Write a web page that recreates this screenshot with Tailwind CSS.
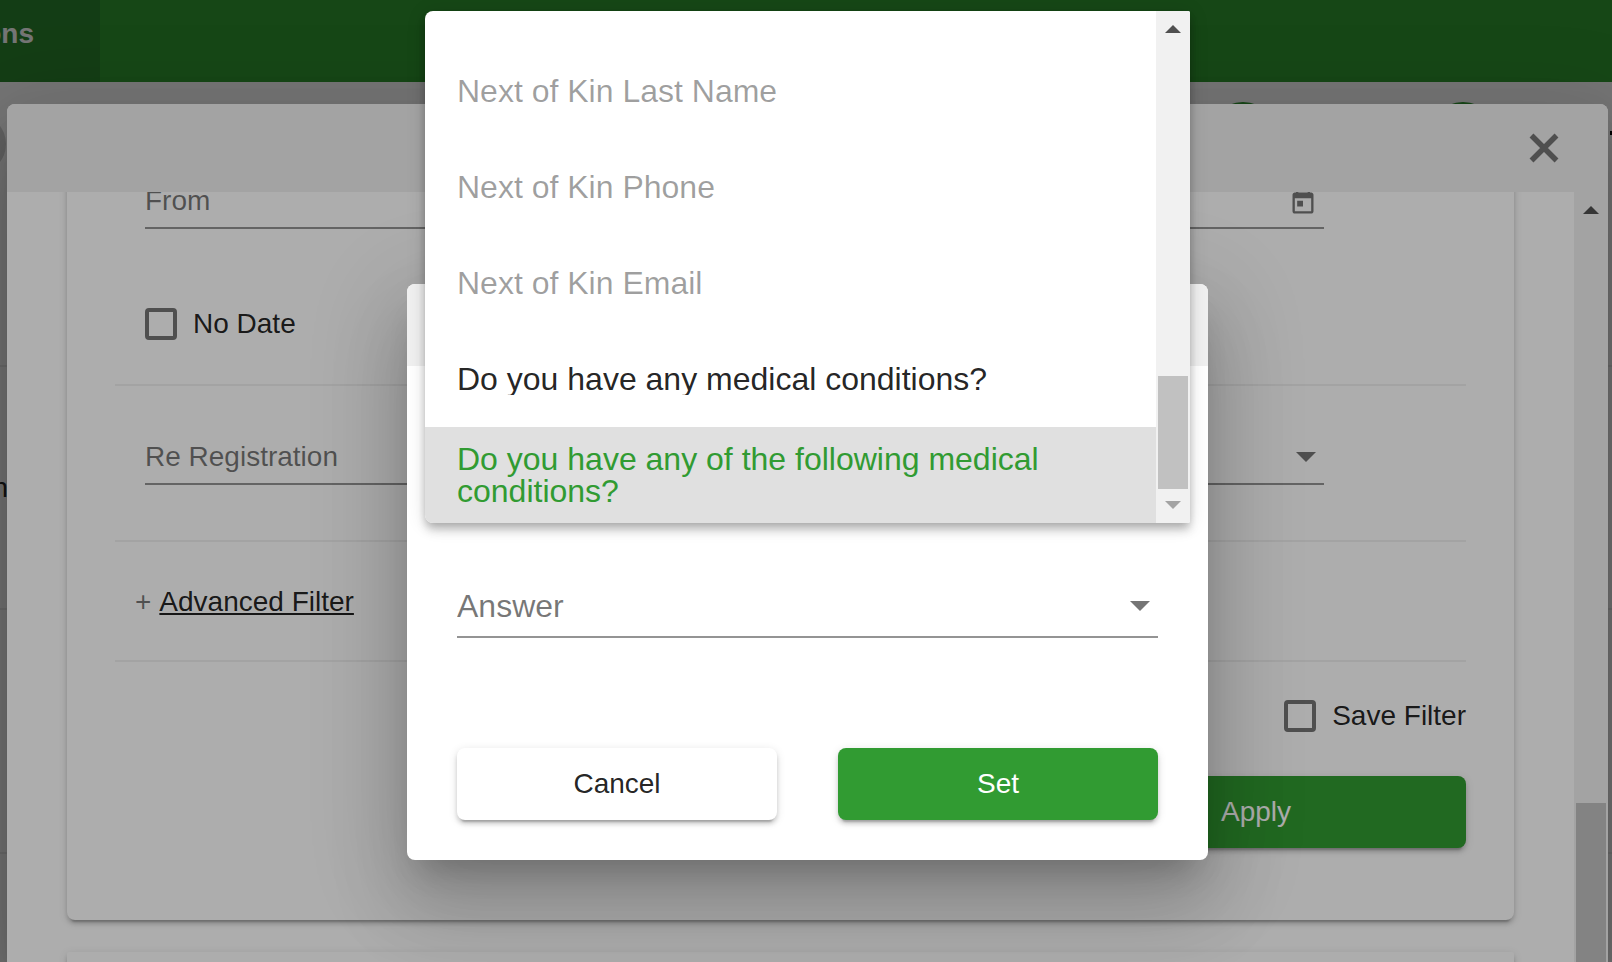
<!DOCTYPE html>
<html lang="en">
<head>
<meta charset="utf-8">
<title>Registrations filter</title>
<script src="https://cdn.jsdelivr.net/npm/@tailwindcss/browser@4"></script>
</head>
<body class="relative h-screen overflow-hidden bg-white font-['Liberation_Sans',Arial,sans-serif] text-[28px] leading-8 text-black/87">

  <!-- Page behind the dialogs -->
  <div class="flex h-screen flex-col overflow-hidden">
    <header class="flex h-[82px] shrink-0 bg-[#319b32]">
      <div class="flex w-[100px] justify-end bg-[#2c862e] pt-[18px] pr-[66px] font-bold text-white">ons</div>
    </header>
    <div class="relative h-[283px] shrink-0">
      <span class="absolute top-[32px] -left-[54px] size-[60px] rounded-full bg-[#d6d6d6]"></span>
      <span class="absolute top-[20px] right-[333px] size-[72px] rounded-full bg-[#319b32]"></span>
      <span class="absolute top-[20px] right-[113px] size-[72px] rounded-full bg-[#319b32]"></span>
      <span class="absolute top-[49px] right-0 h-1 w-[2px] bg-black"></span>
    </div>
    <div class="flex h-[243px] shrink-0 items-center border-t-2 border-[#ececec]"><span class="flex w-2 justify-end">n</span></div>
    <div class="h-[244px] shrink-0 border-t-2 border-[#ececec]"></div>
    <div class="h-[244px] shrink-0 border-t-2 border-[#ececec]"></div>
  </div>
  <div class="absolute inset-0 bg-black/32"></div>

  <!-- Filter dialog -->
  <div class="absolute inset-0 flex pt-[104px] pr-1 pl-[7px]">
    <section role="dialog" aria-label="Filter" class="flex min-w-0 flex-1 flex-col rounded-t-lg bg-white shadow-[0_22px_30px_-14px_rgba(0,0,0,0.2),0_48px_76px_6px_rgba(0,0,0,0.14),0_18px_92px_16px_rgba(0,0,0,0.12)]">
      <div class="flex h-[88px] shrink-0 items-center justify-end rounded-t-lg bg-[#f0f0f0] pr-[39px]">
        <button type="button" aria-label="Close" class="text-[#757575]">
          <svg class="size-[50px]" viewBox="0 0 50 50" fill="none" stroke="currentColor" stroke-width="5.5"><path d="M12.5 12.5L37.5 37.5M37.5 12.5L12.5 37.5"/></svg>
        </button>
      </div>
      <div class="flex min-h-0 flex-1">
        <div class="min-w-0 flex-1 overflow-hidden px-[60px]">
          <div class="-mt-3 flex flex-col rounded-b-lg bg-white px-12 pb-[72px] shadow-[0_6px_2px_-4px_rgba(0,0,0,0.2),0_4px_4px_rgba(0,0,0,0.14),0_2px_10px_rgba(0,0,0,0.12)]">
            <div class="mr-[142px] ml-[30px] flex h-[49px] items-start border-b-2 border-black/42 pt-[5px] pr-[7px]">
              <input type="text" aria-label="From" placeholder="From" class="h-8 min-w-0 flex-1 bg-transparent outline-none placeholder:text-black/54">
              <button type="button" aria-label="Open calendar" class="pt-1 text-black/54">
                <svg class="size-7" viewBox="0 0 24 24" fill="currentColor"><path d="M19 3h-1V1h-2v2H8V1H6v2H5c-1.11 0-1.99.9-1.99 2L3 19c0 1.1.89 2 2 2h14c1.1 0 2-.9 2-2V5c0-1.1-.9-2-2-2zm0 16H5V8h14v11zM7 10h5v5H7z"/></svg>
              </button>
            </div>
            <label class="mt-[79px] ml-[30px] flex items-center gap-4">
              <input type="checkbox" class="size-8 appearance-none rounded-sm border-4 border-[#757575]">No Date
            </label>
            <hr class="mt-11 border-t-2 border-[#f0f0f0]">
            <div class="mt-[50px] mr-[142px] ml-[30px] flex h-[49px] items-start border-b-2 border-black/42 pt-[5px] pr-2">
              <select aria-label="Re Registration" class="h-8 min-w-0 flex-1 appearance-none bg-transparent text-black/54 outline-none"><option>Re Registration</option></select>
              <svg class="mt-[11px] h-[10px] w-5" viewBox="0 0 20 10" fill="#757575"><path d="M0 0h20L10 10z"/></svg>
            </div>
            <hr class="mt-[55px] border-t-2 border-[#f0f0f0]">
            <div class="mt-11 ml-5 flex gap-2">
              <span class="text-black/54">+</span>
              <a href="#" class="underline decoration-2 underline-offset-2">Advanced Filter</a>
            </div>
            <hr class="mt-[42px] border-t-2 border-[#f0f0f0]">
            <label class="mt-[38px] flex items-center gap-4 self-end">
              <input type="checkbox" class="size-8 appearance-none rounded-sm border-4 border-[#757575]">Save Filter
            </label>
            <button type="button" class="mt-11 h-[72px] w-[420px] self-end rounded-lg bg-[#319b32] text-white shadow-[0_6px_2px_-4px_rgba(0,0,0,0.2),0_4px_4px_rgba(0,0,0,0.14),0_2px_10px_rgba(0,0,0,0.12)]">Apply</button>
          </div>
          <div class="mt-8 h-20 rounded-t-xs bg-white shadow-[0_6px_2px_-4px_rgba(0,0,0,0.2),0_4px_4px_rgba(0,0,0,0.14),0_2px_10px_rgba(0,0,0,0.12)]"></div>
        </div>
        <div aria-hidden="true" class="flex w-[34px] flex-col items-center bg-[#f1f1f1] pt-[14px]">
          <svg class="h-2 w-4 shrink-0" viewBox="0 0 16 8" fill="#505050"><path d="M0 8h16L8 0z"/></svg>
          <div class="mt-[589px] w-[30px] flex-1 bg-[#c1c1c1]"></div>
        </div>
      </div>
    </section>
  </div>
  <div class="absolute inset-0 bg-black/32"></div>

  <!-- Question and answer dialog -->
  <div class="absolute inset-0 flex items-start justify-center pt-[284px] pl-[3px]">
    <section role="dialog" aria-label="Advanced filter" class="relative w-[801px] rounded-lg bg-white shadow-[0_22px_30px_-14px_rgba(0,0,0,0.2),0_48px_76px_6px_rgba(0,0,0,0.14),0_18px_92px_16px_rgba(0,0,0,0.12)]">
      <div class="h-[82px] rounded-t-lg bg-[#f0f0f0]"></div>
      <div class="px-[50px] pt-[214px] pb-10">
        <div class="flex h-[58px] items-center border-b-2 border-black/42 pr-2 pb-1 text-[32px]">
          <select aria-label="Answer" class="h-10 min-w-0 flex-1 appearance-none bg-transparent text-black/54 outline-none"><option>Answer</option></select>
          <svg class="h-[10px] w-5" viewBox="0 0 20 10" fill="#757575"><path d="M0 0h20L10 10z"/></svg>
        </div>
        <div class="mt-[110px] flex justify-between">
          <button type="button" class="h-[72px] w-80 rounded-lg bg-white shadow-[0_6px_2px_-4px_rgba(0,0,0,0.2),0_4px_4px_rgba(0,0,0,0.14),0_2px_10px_rgba(0,0,0,0.12)]">Cancel</button>
          <button type="button" class="h-[72px] w-80 rounded-lg bg-[#319b32] text-white shadow-[0_6px_2px_-4px_rgba(0,0,0,0.2),0_4px_4px_rgba(0,0,0,0.14),0_2px_10px_rgba(0,0,0,0.12)]">Set</button>
        </div>
      </div>

      <!-- Open question list -->
      <div class="absolute inset-x-[18px] -top-[273px] flex h-[512px] rounded-l-lg rounded-r-xs bg-white text-[32px] shadow-[0_4px_8px_-2px_rgba(0,0,0,0.2),0_8px_10px_rgba(0,0,0,0.14),0_2px_20px_rgba(0,0,0,0.12)]">
        <ul role="listbox" aria-label="Question" class="flex min-w-0 flex-1 flex-col justify-end overflow-hidden rounded-l-lg">
          <li role="option" aria-disabled="true" class="flex h-24 shrink-0 items-center px-8 text-black/38">Next of Kin Last Name</li>
          <li role="option" aria-disabled="true" class="flex h-24 shrink-0 items-center px-8 text-black/38">Next of Kin Phone</li>
          <li role="option" aria-disabled="true" class="flex h-24 shrink-0 items-center px-8 text-black/38">Next of Kin Email</li>
          <li role="option" class="flex h-24 shrink-0 items-center px-8"><span class="overflow-hidden">Do you have any medical conditions?</span></li>
          <li role="option" aria-selected="true" class="flex h-24 shrink-0 items-center bg-[#e0e0e0] px-8 text-[#319b32]"><span class="overflow-hidden">Do you have any of the following medical conditions?</span></li>
        </ul>
        <div aria-hidden="true" class="flex w-[34px] flex-col items-center rounded-r-xs bg-[#f1f1f1] py-[14px]">
          <svg class="h-2 w-4" viewBox="0 0 16 8" fill="#505050"><path d="M0 8h16L8 0z"/></svg>
          <div class="mt-auto mb-3 h-[113px] w-[30px] bg-[#c1c1c1]"></div>
          <svg class="h-2 w-4" viewBox="0 0 16 8" fill="#a3a3a3"><path d="M0 0h16L8 8z"/></svg>
        </div>
      </div>
    </section>
  </div>
</body>
</html>
